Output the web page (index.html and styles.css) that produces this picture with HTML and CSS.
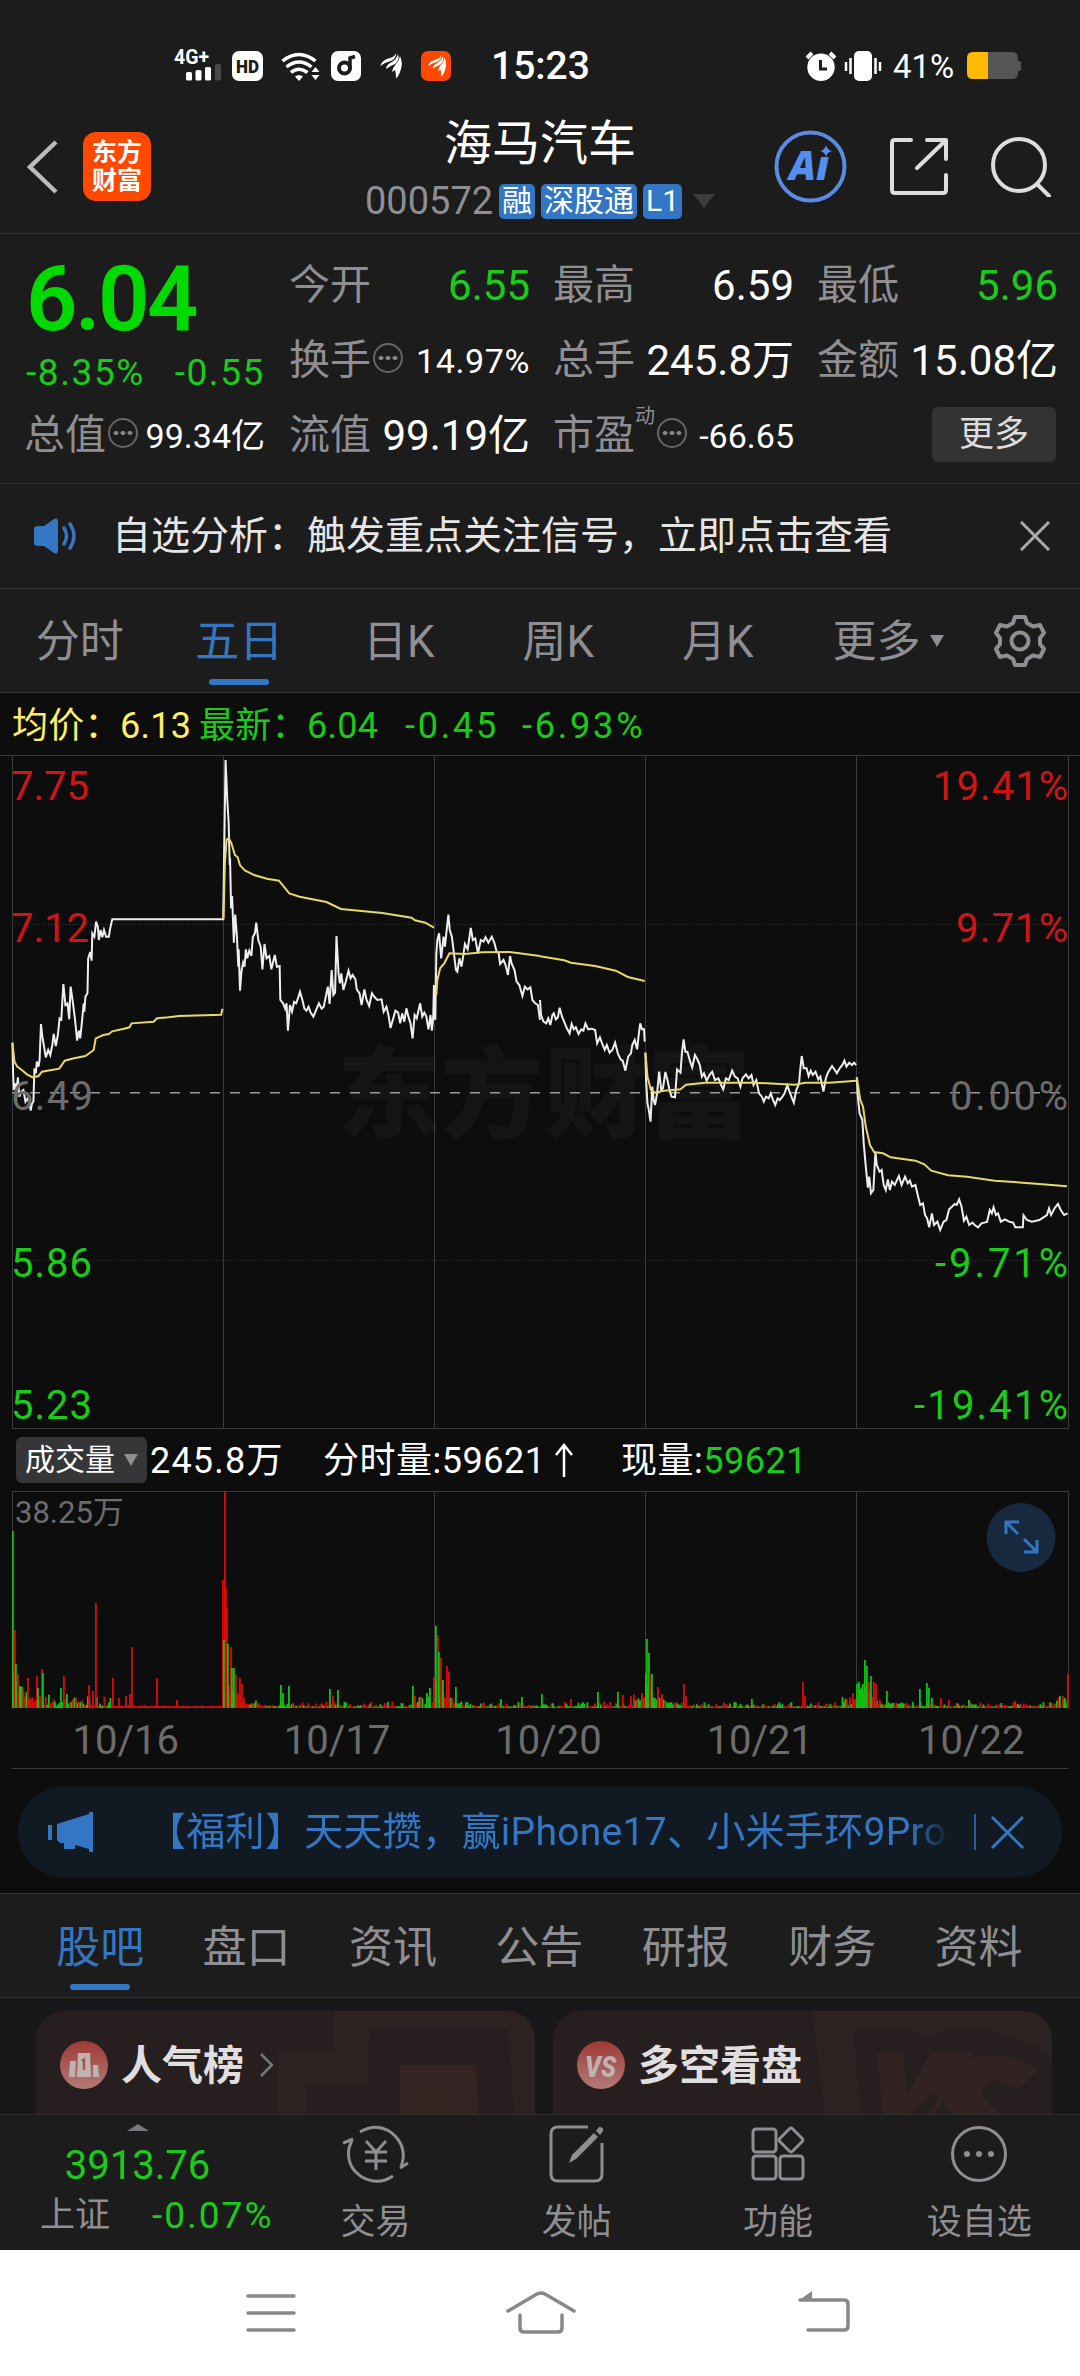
FILE: index.html
```html
<!DOCTYPE html>
<html lang="zh-CN">
<head>
    <meta charset="UTF-8">
    <meta name="viewport" content="width=device-width, initial-scale=1.0">
    <title>海马汽车 000572</title>
    <link rel="stylesheet" href="styles.css">
</head>
<body>
    <div class="status-bar">
        <svg class="status-left" width="300" height="60" viewBox="0 0 300 60">
            <text class="net" x="14" y="27.500" textLength="35" lengthAdjust="spacingAndGlyphs">4G+</text>
            <g fill="#fff">
                <rect x="26" y="36" width="6" height="8.500" rx="1.500"/>
                <rect x="35.500" y="34" width="6" height="10.500" rx="1.500"/>
                <rect x="45" y="31" width="6" height="13.500" rx="1.500"/>
                <rect x="55" y="28" width="6" height="16.500" rx="1.500" fill="#4a4a4a"/>
                <rect x="72" y="15" width="31" height="30" rx="7"/>
                <rect x="171" y="15" width="30" height="30" rx="7"/>
                <path d="M135 40.500q4-3 8 0l-4 4.500z"/>
                <path d="M151.500 36l4-5 4 5zM151.500 39l4 5 4-5z"/>
            </g>
            <g fill="none" stroke="#fff" stroke-width="3.500">
                <path d="M122.500 25q16.500-13 33 0"/>
                <path d="M126.500 31q12.500-10 25 0"/>
                <path d="M131 36.500q8-6.500 16.500 0"/>
            </g>
            <text class="hd" x="76" y="36.500" textLength="23" lengthAdjust="spacingAndGlyphs">HD</text>
            <circle cx="184.500" cy="32" r="5.500" fill="none" stroke="#1c1c1c" stroke-width="4"/>
            <path d="M190 33V22l5-1.500" fill="none" stroke="#1c1c1c" stroke-width="3.500"/>
            <rect x="261" y="15" width="30" height="30" rx="7" fill="#ff4800"/>
            <g fill="#fff">
                <path d="M220 30q3-7 10-8 5-1.500 6-5 .5 5-4 7.500-7 2-12 5.500z"/>
                <path d="M226 33q0-4 5-6.500 6-3.500 7-8.500 2 6-3 10-5 2-9 5z"/>
                <path d="M232 36q1-5 4-8 3-3 4-8 3 7 1 13-2 7-5 9.500 0-6-1-8.500z"/>
            </g>
            <g fill="#fff" transform="translate(83 5) scale(.84)">
                <path d="M220 30q3-7 10-8 5-1.500 6-5 .5 5-4 7.500-7 2-12 5.500z"/>
                <path d="M226 33q0-4 5-6.500 6-3.500 7-8.500 2 6-3 10-5 2-9 5z"/>
                <path d="M232 36q1-5 4-8 3-3 4-8 3 7 1 13-2 7-5 9.500 0-6-1-8.500z"/>
            </g>
        </svg>
        <span class="clock">15:23</span>
        <svg class="status-right" width="82" height="60" viewBox="0 0 82 60">
            <circle cx="20" cy="31.300" r="13.700" fill="#fff"/>
            <path d="M6 22l5-5M34 22l-5-5" stroke="#fff" stroke-width="4"/>
            <path d="M19.500 24v9h6.500" fill="none" stroke="#1c1c1c" stroke-width="3"/>
            <rect x="53" y="15" width="18" height="30" rx="5" fill="#fff"/>
            <path d="M49.500 22v16M45 26v9M74.500 22v16M79 26v9" stroke="#fff" stroke-width="2.500"/>
        </svg>
        <span class="percent">41%</span>
        <svg width="56" height="28" viewBox="0 0 56 28">
            <path d="M21 0h24q6 0 6 6v3h1q2 0 2 2v6q0 2-2 2h-1v2q0 6-6 6H21z" fill="#555"/>
            <path d="M21 0H6Q0 0 0 6v15q0 6 6 6h15z" fill="#ffba00"/>
        </svg>
    </div>

    <header class="header">
        <div class="header-left">
            <svg width="32" height="56" viewBox="0 0 32 56"><path d="M29 3L3 28l26 25" fill="none" stroke="#bbb" stroke-width="4.500"/></svg>
            <div class="logo">东方<br>财富</div>
        </div>
        <div class="stock">
            <h1>海马汽车</h1>
            <div class="stock-code">
                <span class="code">000572</span>
                <span class="tag">融</span>
                <span class="tag">深股通</span>
                <span class="tag">L1</span>
                <i class="tri"></i>
            </div>
        </div>
        <div class="header-right">
            <svg width="73" height="73" viewBox="0 0 73 73">
                <circle cx="36.500" cy="36.500" r="34" fill="none" stroke="#5a8be0" stroke-width="4"/>
                <text class="ai" x="15" y="50" textLength="40" lengthAdjust="spacingAndGlyphs">Aı</text>
                <path d="M52 15q1 5 6 6-5 1-6 6-1-5-6-6 5-1 6-6z" fill="#528ff0"/>
            </svg>
            <svg width="58" height="59" viewBox="0 0 58 59" fill="none" stroke="#ddd" stroke-width="4" stroke-linecap="round" stroke-linejoin="round">
                <path d="M21 3H5Q2 3 2 6v47q0 3 3 3h48q3 0 3-3V38M37 3h19v19M55 4L27 31"/>
            </svg>
            <svg width="60" height="60" viewBox="0 0 60 60" fill="none" stroke="#ddd" stroke-width="4" stroke-linecap="round">
                <circle cx="28" cy="28" r="26"/><path d="M46 47l12 12"/>
            </svg>
        </div>
    </header>

    <section class="quote">
        <div class="quote-main">
            <div class="price">6.04</div>
            <div class="change"><span>-8.35%</span><span>-0.55</span></div>
            <div class="item"><label>总值</label><i class="dots"></i><b class="small">99.34亿</b></div>
        </div>
        <div class="quote-grid">
            <div class="item"><label>今开</label><b class="down">6.55</b></div>
            <div class="item"><label>最高</label><b>6.59</b></div>
            <div class="item"><label>最低</label><b class="down">5.96</b></div>
            <div class="item"><label>换手</label><i class="dots"></i><b class="small wide">14.97%</b></div>
            <div class="item"><label>总手</label><b>245.8万</b></div>
            <div class="item"><label>金额</label><b>15.08亿</b></div>
            <div class="item"><label>流值</label><b>99.19亿</b></div>
            <div class="item"><label>市盈</label><sup>动</sup><i class="dots"></i><b class="small">-66.65</b></div>
            <div class="item"><button class="more">更多</button></div>
        </div>
    </section>

    <div class="notice">
        <svg width="46" height="36" viewBox="0 0 46 36">
            <path d="M0 11q0-3 4-3h6L20 1q4-2 4 3v28q0 5-4 3L10 28H4q-4 0-4-3z" fill="#3377c4"/>
            <path d="M30 10q5 8 0 16M36 6q8 12 0 24" fill="none" stroke="#3377c4" stroke-width="3.500" stroke-linecap="round"/>
        </svg>
        <p>自选分析：触发重点关注信号，立即点击查看</p>
        <svg width="30" height="30" viewBox="0 0 30 30"><path d="M1 1l28 28M29 1L1 29" stroke="#aaa" stroke-width="3"/></svg>
    </div>

    <nav class="period">
        <a>分时</a>
        <a class="active">五日</a>
        <a>日K</a>
        <a>周K</a>
        <a>月K</a>
        <a class="period-more">更多<i class="tri"></i></a>
        <svg width="52" height="54" viewBox="0 0 52 54" fill="none" stroke="#8e8e93" stroke-width="4" stroke-linejoin="round">
            <path d="M21 3h10l2 6 6 3.500 7-1.500 4 8-4 5v6l4 5-4 8-7-1.500-6 3.500-2 6H21l-2-6-6-3.500L6 43l-4-8 4-5v-6l-4-5 4-8 7 1.500L19 9z"/>
            <circle cx="26" cy="27" r="8.500"/>
        </svg>
    </nav>

    <section class="charts">
        <div class="legend">
            <span class="avg">均价：</span><span class="avg">6.13</span>
            <span>最新：</span><span>6.04</span><span class="minus">-0.45</span><span class="minus">-6.93%</span>
        </div>
        <svg class="price-chart" width="1080" height="674" viewBox="0 0 1080 674">
            <text class="watermark" x="337" y="375" textLength="414" lengthAdjust="spacingAndGlyphs">东方财富</text>
            <g class="grid-lines">
                <path d="M0 .5H1080M12 673.500H1068M12.500 0V674M223.500 0V674M434.500 0V674M645.500 0V674M856.500 0V674M1068.500 0V674"/>
                <path class="dotted" d="M12 169.500H1068M12 505.500H1068"/>
            </g>
            <path class="base-line" d="M12 337.700H1068"/>
            <g class="line">
                <g transform="translate(0 -15) scale(.34439 .33333)">
                    <polyline points="36,908 38,1000 40,1050 44,1030 48,1050 52,1012 56,1070 62,1055 68,1050 74,1085 80,1075 86,1090 89,1112 93,1090 97,1085 100,985 104,1000 107,965 112,980 115,960 119,852 123,890 128,920 133,952 140,930 146,945 152,915 156,882 162,918 168,885 173,835 178,838 184,732 190,795 196,790 201,838 205,740 212,790 218,840 224,902 229,872 233,895 238,845 243,790 245,815 248,770 254,760 256,655 262,636 266,662 268,580 274,590 279,545 284,560 287,600 292,570 297,592 302,570 308,590 316,590 320,565 326,538 648,538 650,400 655,60 660,180 664,250 667,375 668,355 671,505 674,468 679,608 683,524 688,590 692,680 693,628 697,752 701,695 706,668 710,680 714,628 718,655 724,632 730,648 734,592 740,580 744,548 750,600 757,620 762,688 768,612 774,655 782,648 788,688 798,645 804,680 812,678 814,780 822,790 828,806 832,790 836,872 842,795 848,815 854,786 860,790 865,775 871,755 878,780 884,806 890,812 896,800 902,818 910,830 918,810 926,790 934,806 940,800 946,770 952,740 957,792 963,690 968,765 973,758 977,588 983,700 987,730 991,700 997,750 1004,725 1012,692 1018,715 1024,705 1032,718 1036,748 1044,760 1050,795 1058,748 1064,778 1072,798 1080,760 1088,772 1096,780 1108,778 1114,815 1122,800 1128,825 1134,864 1142,835 1148,812 1156,818 1162,850 1168,820 1174,845 1180,805 1186,830 1192,850 1198,895 1204,825 1210,835 1220,790 1226,830 1232,818 1238,830 1244,868 1250,825 1254,872 1258,830 1260,735 1264,840 1267,640 1270,600 1275,580 1281,655 1288,590 1292,620 1298,560 1302,524 1306,570 1312,590 1318,640 1324,690 1328,695 1334,655 1340,680 1344,655 1350,612 1358,628 1362,600 1367,564 1373,600 1380,595 1388,640 1396,600 1404,605 1410,592 1418,608 1428,590 1436,610 1442,635 1448,640 1452,672 1462,660 1468,675 1475,705 1481,648 1486,672 1494,690 1500,725 1508,735 1517,768 1524,740 1532,748 1540,742 1546,780 1554,790 1562,795 1568,840"/>
                    <polyline class="mean" points="36,908 42,965 50,980 66,992 78,1003 95,1012 112,1008 122,995 150,990 172,986 188,962 215,955 248,948 272,930 278,895 300,885 316,882 326,874 360,866 376,862 382,850 446,845 456,835 490,832 520,828 642,824 646,806"/>
                    <polyline class="mean" points="649,538 653,370 658,300 664,294 672,310 682,345 690,352 697,376 712,392 740,406 775,416 810,422 840,460 870,470 948,486 990,507 1050,513 1110,519 1195,533 1205,541 1235,548 1260,563"/>
                    <polyline class="mean" points="1267,765 1270,720 1278,685 1290,670 1305,640 1350,642 1400,637 1480,636 1568,648"/>
                </g>
                <g transform="translate(540 -15) scale(.34439 .33333)">
                    <polyline points="0,780 3,825 10,845 18,850 24,835 30,855 36,825 40,820 46,838 52,832 57,803 64,830 70,845 78,865 86,880 92,852 98,868 104,862 112,882 120,868 126,872 132,850 140,868 150,866 160,870 166,910 174,892 182,915 188,930 194,915 202,938 210,930 218,908 226,940 234,958 240,962 248,992 256,950 264,940 268,915 275,900 282,928 286,890 291,850 296,868 302,868 304,905"/>
                    <polyline points="306,938 308,1020 312,1090 316,1110 321,1145 326,1040 330,1080 334,1095 340,1060 346,995 352,1050 357,1045 364,996 370,1020 376,1050 382,1070 392,1072 398,988 408,998 412,940 417,898 422,935 428,935 436,965 442,982 450,945 458,960 464,975 470,1010 476,1000 484,1022 492,1005 500,995 508,1020 518,1015 526,1035 532,1048 540,1015 548,1020 558,992 566,1010 574,1015 582,1040 588,1015 598,1003 606,1015 614,1005 620,1035 628,1020 636,1060 644,1070 650,1085 656,1070 664,1075 670,1060 676,1078 683,1095 690,1075 696,1080 704,1070 710,1060 718,1036 728,1065 737,1088 744,1050 752,1032 756,985 760,948 766,985 774,985 780,1008 786,992 792,1005 800,995 808,1018 814,1010 823,1055 830,1015 836,998 848,978 856,990 862,1000 870,985 878,975 884,962 890,980 898,968 906,975 912,968 918,975"/>
                    <polyline points="920,1012 922,1060 928,1120 936,1140 940,1210 946,1280 952,1343 956,1310 961,1360 968,1350 974,1236 978,1275 986,1295 992,1290 998,1335 1004,1350 1010,1318 1016,1350 1022,1325 1030,1335 1042,1308 1050,1335 1060,1310 1068,1330 1074,1322 1080,1340 1090,1335 1098,1370 1104,1395 1112,1390 1118,1425 1124,1435 1130,1462 1138,1420 1144,1455 1154,1445 1162,1470 1172,1445 1180,1440 1188,1408 1196,1400 1204,1392 1210,1395 1217,1378 1224,1400 1231,1442 1238,1430 1246,1455 1256,1448 1262,1455 1272,1462 1282,1450 1298,1446 1306,1410 1312,1420 1317,1402 1324,1425 1330,1420 1338,1445 1350,1438 1362,1445 1374,1448 1380,1462 1402,1462 1404,1426 1414,1440 1428,1445 1450,1440 1462,1432 1472,1425 1478,1405 1484,1425 1494,1405 1504,1392 1512,1410 1522,1425 1532,1420"/>
                    <polyline class="mean" points="0,649 70,661 90,668 160,678 220,692 255,711 304,723"/>
                    <polyline class="mean" points="306,938 312,1010 322,1050 334,1058 360,1052 408,1048 424,1034 480,1028 620,1028 740,1034 770,1028 840,1028 918,1022"/>
                    <polyline class="mean" points="920,1012 930,1080 938,1100 946,1160 958,1215 970,1236 996,1240 1018,1252 1090,1262 1116,1273 1136,1292 1185,1306 1240,1310 1320,1322 1440,1331 1530,1339"/>
                </g>
            </g>
            <g class="axis">
                <text class="up" x="11" y="45">7.75</text>
                <text class="up" x="11" y="187">7.12</text>
                <text class="flat" x="11" y="355" textLength="82">6.49</text>
                <text class="down" x="11" y="522" textLength="81">5.86</text>
                <text class="down" x="11" y="664" textLength="81">5.23</text>
            </g>
            <g class="axis">
                <text class="up" x="933" y="45" textLength="135">19.41%</text>
                <text class="up" x="956" y="187" textLength="112">9.71%</text>
                <text class="flat" x="950" y="355" textLength="118">0.00%</text>
                <text class="down" x="935" y="522" textLength="133">-9.71%</text>
                <text class="down" x="914" y="664" textLength="154">-19.41%</text>
            </g>
        </svg>
        <div class="vol-legend">
            <button>成交量<i class="tri"></i></button>
            <span class="vol-total">245.8万</span>
            <span class="vol-min">分时量:59621<svg width="18" height="34" viewBox="0 0 18 34"><path d="M9 34V2M1 12L9 2l8 10" fill="none" stroke="#fff" stroke-width="2.500"/></svg></span>
            <span>现量:<em>59621</em></span>
        </div>
        <svg class="vol-chart" width="1080" height="218" viewBox="0 0 1080 218">
            <g class="grid-lines">
                <path d="M12 .5H1068M12.500 0V218M434.500 0V218M645.500 0V218M856.500 0V218M1068.500 0V218"/>
            </g>
            <g id="bars"></g>
            <text class="vol-max" x="15" y="32">38.25万</text>
            <circle cx="1021" cy="46.500" r="34.500" fill="#16293f"/>
            <path d="M1006 43V31h13M1007 32l11 11M1037 49v12h-13M1036 60l-12-12" fill="none" stroke="#3377c4" stroke-width="3"/>
        </svg>
        <div class="dates"><span>10/16</span><span>10/17</span><span>10/20</span><span>10/21</span><span>10/22</span></div>
        <div class="promo">
            <svg width="46" height="40" viewBox="0 0 46 40"><path d="M0 13h4v15H0zM9 12L41 2V0h4v40h-4v-3l-14-4v4H16v-6H12l-3-3z" fill="#3377c4"/></svg>
            <p>【福利】天天攒，赢iPhone17、小米手环9Pro></p>
            <svg class="promo-close" width="50" height="36" viewBox="0 0 50 36"><path d="M1 0v36" stroke="#3377c4" stroke-width="1.500"/><path d="M18 3l31 31M49 3L18 34" stroke="#3377c4" stroke-width="3"/></svg>
        </div>
    </section>

    <nav class="tabs">
        <a class="active">股吧</a><a>盘口</a><a>资讯</a><a>公告</a><a>研报</a><a>财务</a><a>资料</a>
    </nav>

    <section class="cards">
        <div class="card">
            <svg class="card-bg" width="499" height="103" viewBox="0 0 499 103">
                <path d="M0 0H298V39H242V103H0z" fill="#271f1f"/>
                <path d="M334 17H472L478 103H271V75H331z" fill="#271f1f"/>
                <path d="M364 54h76l2 49h-79z" fill="#352322"/>
            </svg>
            <svg width="48" height="48" viewBox="0 0 48 48">
                <defs><linearGradient id="badge" x2="0" y2="1"><stop stop-color="#9d3a35"/><stop offset="1" stop-color="#b27b78"/></linearGradient></defs>
                <circle cx="24" cy="24" r="24" fill="url(#badge)"/>
                <path d="M10 20h6l-1 16H9zM18 12h12l1 24H17zM33 24h5l1 12h-6z" fill="#bfb3b2"/>
                <path d="M22 20l2-1.500V29" fill="none" stroke="#a9534f" stroke-width="2.500"/>
            </svg>
            <h2>人气榜</h2>
            <svg class="arrow" width="14" height="24" viewBox="0 0 14 24"><path d="M1 1l11 11L1 23" fill="none" stroke="#777" stroke-width="2.500"/></svg>
        </div>
        <div class="card">
            <svg class="card-bg" width="499" height="103" viewBox="0 0 499 103">
                <path d="M0 0H259L272 103H0z" fill="#271f1f"/>
                <path d="M300 19h62l8 8 20-8q50-5 90 15l19 14v55H308z" fill="#271f1f"/>
                <!-- the lower part of the big VS runs below the card edge -->
                <path d="M324 42h26l4 42 24-42h42L382 103H330z" fill="#322221"/>
                <path d="M378 84h8l-10 19h-20z" fill="#271f1f"/>
                <path d="M402 52q40-18 84 6l-20 20q-26-16-36 0-2 12 18 25H398q-22-30 4-51z" fill="#322221"/>
            </svg>
            <svg width="48" height="48" viewBox="0 0 48 48">
                <circle cx="24" cy="24" r="24" fill="url(#badge)"/>
                <text class="vs" x="8" y="36" textLength="31" lengthAdjust="spacingAndGlyphs">VS</text>
            </svg>
            <h2>多空看盘</h2>
        </div>
    </section>

    <footer class="toolbar">
        <div class="index">
            <i class="tri-up"></i>
            <div class="index-value">3913.76</div>
            <div class="index-row"><span>上证</span><b>-0.07%</b></div>
        </div>
        <a>
            <svg width="66" height="60" viewBox="0 0 66 60" fill="none" stroke="#8e8e93" stroke-width="3">
                <path d="M17 8Q32-1 46 7 62 18 60 35L58 44M57 44l8-5M50 52Q35 62 19 53 3 43 6 24L9 16M0 19l10-4"/>
                <path d="M23 17l10 11 10-11M33 28v18M22 28h22M22 37h22"/>
            </svg>
            交易
        </a>
        <a>
            <svg width="56" height="60" viewBox="0 0 56 60" fill="none" stroke="#8e8e93" stroke-width="3">
                <path d="M39 3H9Q2 3 2 10v40q0 7 7 7h37q7 0 7-7V19"/>
                <path d="M20 39l3-8 22-22 4 4-22 22zM47 7l3-4q5 0 4 4l-3 4z" fill="#8e8e93" stroke="none"/>
            </svg>
            发帖
        </a>
        <a>
            <svg width="54" height="60" viewBox="0 0 54 60" fill="none" stroke="#8e8e93" stroke-width="3">
                <rect x="2" y="5" width="23" height="23" rx="3"/><rect x="2" y="32" width="23" height="23" rx="3"/><rect x="29" y="32" width="23" height="23" rx="3"/>
                <rect x="31" y="7" width="18" height="18" rx="2.500" transform="rotate(45 40 16)"/>
            </svg>
            功能
        </a>
        <a>
            <svg width="58" height="60" viewBox="0 0 58 60">
                <circle cx="29" cy="30" r="26.500" fill="none" stroke="#8e8e93" stroke-width="3"/>
                <g fill="#8e8e93"><circle cx="17" cy="30" r="3"/><circle cx="29" cy="30" r="3"/><circle cx="41" cy="30" r="3"/></g>
            </svg>
            设自选
        </a>
    </footer>

    <div class="nav-bar">
        <svg width="50" height="44" viewBox="0 0 50 44"><path d="M2 5h46M2 22h46M2 39h46" stroke="#888" stroke-width="3.500" stroke-linecap="round"/></svg>
        <svg width="70" height="44" viewBox="0 0 70 44" fill="none" stroke="#888" stroke-width="3.500" stroke-linecap="round">
            <path d="M2 20L31 3q4-2 8 0l29 17M14 24v13q0 4 4 4h34q4 0 4-4V24"/>
        </svg>
        <svg width="52" height="44" viewBox="0 0 52 44">
            <path d="M2 9h44q4 0 4 4v22q0 4-4 4H10" fill="none" stroke="#888" stroke-width="3.500" stroke-linecap="round"/>
            <path d="M0 10L14 0v10z" fill="#888"/>
        </svg>
    </div>
    <script src="chart.js"></script>
</body>
</html>
```
FILE: styles.css
```css
* {
    box-sizing: border-box;
}
body {
    margin: 0;
    width: 1080px;
    height: 2376px;
    overflow: hidden;
    background: #1c1c1c;
    color: #fff;
    font-family: Roboto, "Noto Sans CJK SC", sans-serif;
    line-height: 1;
}
h1, h2, p {
    margin: 0;
    font-weight: normal;
}
svg {
    display: block;
    flex: none;
}
button {
    border: 0;
    padding: 0;
    font-family: inherit;
}
i, em {
    font-style: normal;
}
.tri {
    display: inline-block;
    border: 7px solid transparent;
    border-top: 12px solid #8e8e93;
    border-bottom: 0;
}

/* status bar */
.status-bar {
    display: flex;
    align-items: center;
    height: 132px;
    padding-left: 160px;
}
.net {
    font-size: 21px;
    font-weight: 700;
    fill: #fff;
}
.hd {
    font-size: 18px;
    font-weight: 900;
    fill: #1c1c1c;
}
.clock {
    width: 310px;
    margin-left: 31px;
    font-size: 39px;
    font-weight: 500;
}
.percent {
    width: 74px;
    margin-left: 10px;
    font-size: 33px;
}

/* header */
.header {
    display: grid;
    grid-template-columns: 1fr auto 1fr;
    height: 102px;
    border-bottom: 1px solid #353535;
}
.header-left {
    display: flex;
    align-items: center;
    gap: 24px;
    height: 69px;
    padding-left: 27px;
}
.logo {
    width: 68px;
    height: 69px;
    border-radius: 13px;
    background: #ff4800;
    padding-top: 7px;
    font-size: 25px;
    line-height: 28px;
    font-weight: 700;
    text-align: center;
}
.stock {
    text-align: center;
    margin-top: -13px;
}
.stock h1 {
    font-size: 48px;
    line-height: 50px;
}
.stock-code {
    display: flex;
    align-items: center;
    height: 36px;
    margin-top: 14px;
}
.code {
    width: 134px;
    font-size: 38px;
    text-align: left;
    color: #8e8e93;
}
.tag {
    height: 35px;
    margin-right: 6px;
    padding: 0 3px;
    border-radius: 5px;
    background: #3377c4;
    font-size: 30px;
    line-height: 33px;
}
.stock-code .tri {
    margin-left: 5px;
    border-width: 14px 11px 0;
    border-top-color: #3a3a3a;
}
.header-right {
    display: flex;
    justify-content: flex-end;
    align-items: center;
    gap: 43px;
    height: 69px;
    padding-right: 29px;
}
.ai {
    font-family: "Open Sans", Roboto, sans-serif;
    font-size: 40px;
    font-weight: 800;
    font-style: italic;
    fill: #528ff0;
}

/* quote */
.quote {
    display: grid;
    grid-template-columns: 239px 769px;
    gap: 24px;
    height: 250px;
    padding: 14px 22px 0 26px;
    border-bottom: 1px solid #2c2c2c;
}
.price {
    height: 100px;
    font-size: 90px;
    line-height: 103px;
    font-weight: 600;
    letter-spacing: -2.5px;
    color: #00da00;
}
.change {
    display: flex;
    justify-content: space-between;
    height: 50px;
    font-size: 37px;
    line-height: 50px;
    letter-spacing: 1.6px;
    color: #18cc18;
}
.quote-grid {
    display: grid;
    grid-template-columns: repeat(3, 241px);
    grid-auto-rows: 75px;
    column-gap: 23px;
}
.item {
    display: flex;
    align-items: center;
    height: 75px;
}
.item label {
    font-size: 41px;
    color: #8e8e93;
}
.quote-main .item label {
    margin-left: -2px;
}
.item b {
    margin-left: auto;
    font-size: 42px;
    font-weight: 400;
    white-space: nowrap;
}
.item b.small {
    font-size: 34px;
}
.item b.wide {
    letter-spacing: .6px;
}
.item .down,
.down {
    color: #18cc18;
    fill: #18cc18;
}
.item sup {
    width: 20px;
    align-self: flex-start;
    margin-top: 8px;
    font-size: 20px;
    line-height: 20px;
    color: #8e8e93;
}
.dots {
    width: 30px;
    height: 30px;
    margin: -5px 0 0 2px;
    border: 2px solid #666;
    border-radius: 50%;
    background: radial-gradient(circle, #888 2px, transparent 2.5px) 50% 50% / 7px 26px repeat-x content-box;
    padding: 0 3px;
}
.more {
    width: 124px;
    height: 55px;
    margin: -3px 2px 0 auto;
    border-radius: 6px;
    background: #333;
    color: #ddd;
    font-size: 35px;
    line-height: 53px;
}

/* notice */
.notice {
    display: flex;
    align-items: center;
    height: 105px;
    padding: 0 30px 0 34px;
    border-bottom: 1px solid #353535;
}
.notice p {
    flex: 1;
    margin-left: 32px;
    font-size: 39px;
    color: #e6e6e6;
}

/* chart period */
.period {
    display: flex;
    align-items: center;
    height: 104px;
    border-bottom: 1px solid #353535;
    font-size: 44px;
    color: #8e8e93;
}
.period a {
    position: relative;
    width: 159.5px;
    line-height: 107px;
    height: 104px;
    text-align: center;
}
.period .period-more {
    width: 196px;
    padding-left: 35px;
    text-align: left;
}
.period-more .tri {
    margin-left: 9px;
    vertical-align: 10px;
}
.active {
    color: #3377c4;
}
.active::after {
    content: "";
    position: absolute;
    left: 50%;
    bottom: 8px;
    width: 60px;
    height: 6px;
    margin-left: -30px;
    border-radius: 3px;
    background: #3377c4;
}

/* charts */
.charts {
    height: 1201px;
    background: #0d0d0d;
    border-bottom: 1px solid #353535;
}
.legend {
    display: grid;
    grid-template-columns: 108px 79px 108px 98px 117px auto;
    height: 62px;
    padding-left: 12px;
    font-size: 36px;
    line-height: 66px;
    letter-spacing: .3px;
    white-space: nowrap;
    color: #18cc18;
}
.legend .avg {
    color: #ffee66;
}
.legend .minus {
    letter-spacing: 2.8px;
}
.watermark {
    font-size: 100px;
    font-weight: 900;
    fill: #141414;
}
.grid-lines path {
    stroke: #3a3a3a;
    stroke-width: 1;
}
.grid-lines .dotted {
    stroke: #333;
    stroke-dasharray: 1 2;
}
.base-line {
    stroke: #999;
    stroke-width: 1.5;
    stroke-dasharray: 10 10;
    stroke-dashoffset: 2;
}
.line polyline {
    fill: none;
    stroke: #eee;
    stroke-width: 2;
    vector-effect: non-scaling-stroke;
}
.line .mean {
    stroke: #e6d968;
}
.axis {
    font-size: 40px;
}
.up {
    fill: #d01414;
}
.flat {
    fill: #6c6c6c;
}
.vol-legend {
    display: flex;
    align-items: center;
    height: 62px;
    padding: 2px 0 0 16px;
    font-size: 36px;
    letter-spacing: .5px;
}
.vol-legend button {
    width: 131px;
    height: 46px;
    margin: -2px 3px 0 0;
    border-radius: 6px;
    background: #363638;
    color: #fff;
    font-size: 30px;
    line-height: 44px;
}
.vol-legend button .tri {
    margin-left: 9px;
    vertical-align: 4px;
}
.vol-total {
    width: 173px;
    letter-spacing: 1.2px;
}
.vol-min {
    display: flex;
    width: 298px;
}
.vol-min svg {
    margin-left: 10px;
}
.vol-legend em {
    color: #18cc18;
}
.vol-max {
    font-size: 31px;
    fill: #6c6c6c;
}
.bar-up {
    fill: #d90a0a;
}
.bar-down {
    fill: #14bf14;
}
.dates {
    display: grid;
    grid-template-columns: repeat(5, 211.4px);
    height: 60px;
    margin: 0 12px;
    border-bottom: 1px solid #3a3a3a;
    font-size: 40px;
    line-height: 64px;
    text-align: center;
    text-indent: 16px;
    color: #6c6c6c;
}
.promo {
    display: flex;
    align-items: center;
    height: 90px;
    margin: 18px 18px 0;
    padding: 0 38px 0 30px;
    border-radius: 45px;
    background: #111a23;
    color: #3377c4;
}
.promo p {
    width: 812px;
    margin-left: 53px;
    overflow: hidden;
    font-size: 39px;
    line-height: 60px;
    letter-spacing: .3px;
    white-space: nowrap;
    -webkit-mask-image: linear-gradient(to right, #000 94%, transparent 99%);
    mask-image: linear-gradient(to right, #000 94%, transparent 99%);
}
.promo-close {
    margin-left: auto;
}

/* content tabs */
.tabs {
    display: grid;
    grid-template-columns: repeat(7, 146.4px);
    height: 104px;
    padding-left: 27px;
    border-bottom: 1px solid #353535;
    font-size: 44px;
    line-height: 109px;
    text-align: center;
    color: #8e8e93;
}
.tabs a {
    position: relative;
    height: 104px;
}

.cards {
    display: grid;
    grid-template-columns: 499px 499px;
    gap: 18px;
    height: 116px;
    padding: 13px 36px 0;
    background: #18181a;
}
.card {
    position: relative;
    display: flex;
    align-items: center;
    height: 103px;
    padding: 4px 24px 0;
    border-radius: 28px 28px 0 0;
    background: #2c2221;
    overflow: hidden;
}
.card > * {
    position: relative;
}
.card .card-bg {
    position: absolute;
    left: 0;
    top: 0;
}
.card h2 {
    margin: 3px 0 0 13px;
    font-size: 41px;
    font-weight: 700;
    color: #e0dede;
}
.arrow {
    margin-left: 16px;
}
.vs {
    font-size: 30px;
    font-weight: 900;
    font-style: italic;
    fill: #bfb3b2;
}

/* bottom toolbar */
.toolbar {
    display: grid;
    grid-template-columns: 275px repeat(4, 201.25px);
    height: 136px;
    border-top: 1px solid #2e2e2e;
    color: #8e8e93;
    font-size: 35px;
}
.toolbar a {
    display: flex;
    flex-direction: column;
    align-items: center;
    padding-top: 9px;
    gap: 21px;
}
.index {
    display: flex;
    flex-direction: column;
    align-items: center;
}
.tri-up {
    margin-top: 9px;
    border: 11px solid transparent;
    border-top: 0;
    border-bottom: 7px solid #77777c;
}
.index-value {
    margin-top: 15px;
    font-size: 40px;
    color: #18cc18;
}
.index-row {
    display: flex;
    align-items: center;
    gap: 42px;
    width: 275px;
    margin-top: 11px;
    padding-left: 40px;
    white-space: nowrap;
}
.index-row b {
    font-size: 37px;
    font-weight: 400;
    letter-spacing: 2px;
    color: #18cc18;
}

.nav-bar {
    display: grid;
    grid-template-columns: 260px 292px auto;
    height: 126px;
    padding: 41px 0 0 246px;
    background: #fff;
}
```
FILE: chart.js
```js
// [x, height, direction] of the outstanding volume bars
const peaks = [
    [12, 177, 'down'], [14, 78, 'up'], [15, 44, 'down'], [17, 34, 'up'], [19, 22, 'down'], [27, 30, 'up'], [36, 32, 'up'], [37, 20, 'down'],
    [41, 39, 'up'], [42, 35, 'down'], [60, 20, 'down'], [63, 32, 'up'], [88, 23, 'up'], [92, 17, 'up'], [95, 105, 'up'], [112, 30, 'up'],
    [118, 10, 'up'], [125, 12, 'up'], [129, 14, 'up'], [131, 61, 'up'], [156, 30, 'up'], [176, 8, 'up'],
    [222, 128, 'up'], [224, 217, 'up'], [225, 120, 'up'], [226, 100, 'up'], [223, 68, 'down'], [227, 64, 'down'], [230, 61, 'up'],
    [231, 40, 'down'], [233, 40, 'down'], [235, 33, 'up'], [239, 30, 'up'], [241, 24, 'up'], [280, 23, 'down'], [282, 15, 'down'],
    [288, 22, 'down'], [329, 19, 'down'], [332, 12, 'up'], [337, 18, 'down'], [412, 22, 'down'], [414, 12, 'up'], [429, 20, 'down'],
    [433, 31, 'up'], [435, 82, 'down'], [437, 73, 'up'], [438, 56, 'down'], [440, 50, 'up'], [442, 28, 'down'], [446, 42, 'up'],
    [448, 36, 'up'], [455, 21, 'down'], [500, 9, 'down'], [521, 11, 'down'], [541, 14, 'down'], [570, 9, 'up'], [597, 16, 'down'],
    [617, 16, 'down'], [622, 13, 'up'], [641, 15, 'up'], [645, 35, 'down'], [646, 69, 'down'], [648, 55, 'down'], [649, 34, 'up'],
    [651, 34, 'down'], [657, 21, 'up'], [661, 14, 'up'], [683, 24, 'up'], [685, 12, 'up'], [751, 9, 'down'], [802, 26, 'up'],
    [804, 12, 'up'], [852, 15, 'up'], [856, 24, 'down'], [858, 26, 'down'], [862, 24, 'down'], [864, 48, 'down'], [866, 42, 'down'],
    [868, 26, 'up'], [870, 32, 'down'], [873, 26, 'up'], [875, 24, 'up'], [886, 17, 'down'], [919, 19, 'down'], [926, 25, 'down'],
    [928, 20, 'down'], [931, 10, 'down'], [940, 10, 'up'], [948, 8, 'up'], [968, 8, 'down'], [1014, 7, 'up'], [1064, 10, 'down'], [1067, 34, 'up']
];
const bars = document.getElementById('bars');
const base = 217;

function bar(x, height, dir) {
    const rect = document.createElementNS('http://www.w3.org/2000/svg', 'rect');
    rect.setAttribute('x', x);
    rect.setAttribute('y', base - height);
    rect.setAttribute('width', 1.8);
    rect.setAttribute('height', height);
    rect.setAttribute('class', 'bar-' + dir);
    bars.appendChild(rect);
}

let seed = 7;
function random() {
    seed = (seed * 16807) % 2147483647;
    return seed / 2147483647;
}

for (let x = 12; x < 1068; x += 1.5) {
    const fromOpen = (x - 12) % 211.2;
    if (x > 110 && x < 222) {
        bar(x, 1.5 + random(), 'up');
        continue;
    }
    let height = 1.5 + 5 * Math.pow(random(), 3) + 34 * Math.exp(-fromOpen / 11) * (0.4 + 0.6 * random());
    if (x < 110) height += 9 * Math.pow(random(), 2);
    if (fromOpen > 195) height += 10 * random();
    bar(x, height, random() > 0.5 ? 'down' : 'up');
}
peaks.forEach(p => bar(p[0], p[1], p[2]));
```
